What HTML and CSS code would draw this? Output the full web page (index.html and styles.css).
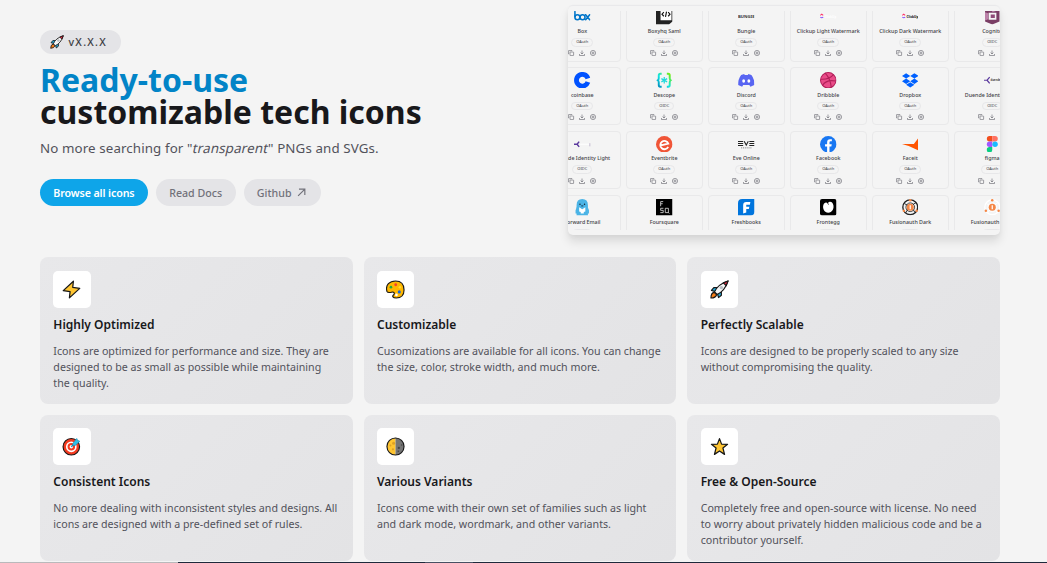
FILE: index.html
```
<!DOCTYPE html>
<html lang="en">
<head>
<meta charset="utf-8">
<title>Ready-to-use customizable tech icons</title>
<link rel="stylesheet" href="styles.css">
</head>
<body>
<svg class="defs" aria-hidden="true">
  <defs>
    <linearGradient id="g-descope" x1="0" y1="1" x2="1" y2="0"><stop offset="0" stop-color="#08b"/><stop offset=".45" stop-color="#12e5e5"/><stop offset="1" stop-color="#7ded00"/></linearGradient>
    <symbol id="acts" viewBox="0 0 28 6"><g fill="none" stroke="#52525b" stroke-width=".55"><rect x="2" y="2" width="3.6" height="3.6" rx=".5"/><path d="M1 4H.6V.6H4V1M14 .5V3.8M12.6 2.6 14 4 15.400 2.600M11.500 4V5.500H16.500V4"/><circle cx="25" cy="3" r="2.600"/><circle cx="25" cy="3" r="1"/></g></symbol>
    <symbol id="box" viewBox="0 0 16 16"><g fill="none" stroke="#0075c9" stroke-width="1.500" stroke-linecap="round"><path d="M.9 3.500V8.500M11.300 6.500 15.200 11.300M15.200 6.500 11.300 11.300"/><circle cx="3.300" cy="8.900" r="2.400"/><circle cx="8.300" cy="8.900" r="2.400"/></g></symbol>
    <symbol id="boxy" viewBox="0 0 16 16"><path fill="#222" d="M0 2.500 4 0H16V13L12.500 16H0z"/><path fill="#fff" d="M4.400.8H15V11.800H4.400z"/><path d="M7.600 4 5.800 6 7.600 8M11.800 4 13.600 6 11.800 8M10.200 3.500 9.200 8.500" fill="none" stroke="#111" stroke-width="1.100"/></symbol>
    <symbol id="bungie" viewBox="0 0 16 16"><text x="0" y="9.600" textLength="16" lengthAdjust="spacingAndGlyphs" font-family="Noto Sans" font-weight="700" font-size="3.800" fill="#333">BUNGIE</text></symbol>
    <symbol id="click-l" viewBox="0 0 16 16"><path d="M.3 7.200 1.700 6 3.100 7.200" fill="none" stroke="#f36" stroke-width="1"/><path d="M.3 8.800Q1.700 10 3.100 8.800" fill="none" stroke="#85f" stroke-width="1"/><text x="4.300" y="9.300" font-family="Noto Sans" font-weight="700" font-size="3.600" textLength="11.700" lengthAdjust="spacingAndGlyphs" fill="#fff">ClickUp</text></symbol>
    <symbol id="click-d" viewBox="0 0 16 16"><path d="M.3 7.200 1.700 6 3.100 7.200" fill="none" stroke="#f36" stroke-width="1"/><path d="M.3 8.800Q1.700 10 3.100 8.800" fill="none" stroke="#85f" stroke-width="1"/><text x="4.300" y="9.300" font-family="Noto Sans" font-weight="800" font-size="3.800" textLength="11.700" lengthAdjust="spacingAndGlyphs" fill="#111">ClickUp</text></symbol>
    <symbol id="cognito" viewBox="0 0 16 16"><path fill="#7a3e65" d="M1 3 8 0 15 3V13L8 16 1 13z"/><path fill="#bd82aa" d="M1 4 4 5V11L1 12zM8 0 13 2.500 8 4z"/><path fill="#f4f4f4" d="M4.500 4.500H12V11.500H4.500z"/><path fill="#8f4b78" d="M6.500 6.200H10.500V9.800H6.500z"/></symbol>
    <symbol id="coinbase" viewBox="0 0 16 16"><path fill="none" stroke="#0052ff" stroke-width="4.700" d="M13.500 6.200A5.700 5.700 0 1 0 13.500 9.800"/></symbol>
    <symbol id="descope" viewBox="0 0 16 16"><g fill="none" stroke="url(#g-descope)" stroke-width="1.900"><path d="M5.500 1.700H4.200Q2.700 1.700 2.700 3.400V5.800Q2.700 7.300 1.800 8 2.700 8.700 2.700 10.200V12.600Q2.700 14.300 4.200 14.300H5.500M10.500 1.700H11.800Q13.300 1.700 13.300 3.400V5.800Q13.300 7.300 14.200 8 13.300 8.700 13.300 10.200V12.600Q13.300 14.300 11.800 14.300H10.500"/></g><path stroke="#20d9dc" stroke-width="1.200" d="M8 4.800V11.200M5.200 6.400 10.800 9.600M10.800 6.400 5.200 9.600"/></symbol>
    <symbol id="discord" viewBox="0 0 16 16"><path fill="#5865f2" d="M3 3 6 2 6.500 3H9.500L10 2 13 3Q16 7 15.800 12.500L12 14.300 11 12.700H5L4 14.300 .2 12.500Q0 7 3 3z"/><g fill="#fff"><ellipse cx="5.500" cy="8.800" rx="1.400" ry="1.700"/><ellipse cx="10.500" cy="8.800" rx="1.400" ry="1.700"/></g></symbol>
    <symbol id="dribbble" viewBox="0 0 16 16"><circle cx="8" cy="8" r="7.500" fill="#ea4c89" stroke="#b2215a"/><path d="M5 1Q10 6 11 15M.7 7Q9 7.500 13 2.500M2.500 13Q6 7 15.300 8.700" fill="none" stroke="#b2215a" stroke-width="1.100"/></symbol>
    <symbol id="dropbox" viewBox="0 0 16 16"><path fill="#0061ff" d="M4 1.200 8 3.800 4 6.400 0 3.800zM12 1.200 16 3.800 12 6.400 8 3.800zM4 6.400 8 9 4 11.600 0 9zM12 6.400 16 9 12 11.600 8 9zM8 9.900 12 12.400 8 15 4 12.400z"/></symbol>
    <symbol id="duende" viewBox="0 0 16 16"><path fill="none" stroke="#5b3a9e" stroke-width="1.200" d="M0 8H3L5.500 5M3 8 5.500 11"/><text x="6.300" y="9.100" font-family="Noto Sans" font-weight="700" font-size="3.200" textLength="9.600" lengthAdjust="spacingAndGlyphs" fill="#444">duende</text></symbol>
    <symbol id="duende-l" viewBox="0 0 16 16"><path fill="none" stroke="#5b3a9e" stroke-width="1.400" d="M0 8H3L5 5.500M3 8 5 10.500"/><path stroke="#fff" d="M6 8H15"/><path stroke="#8d7aa9" stroke-width=".6" d="M15.500 7V10"/></symbol>
    <symbol id="eventbrite" viewBox="0 0 16 16"><circle cx="8" cy="8" r="8" fill="#f05537"/><path d="M3.800 9.400 11.900 7.300A4 4 0 1 0 11.800 10.500" fill="none" stroke="#fff" stroke-width="1.800"/></symbol>
    <symbol id="eve" viewBox="0 0 16 16"><path d="M0 5.300H5M0 7.300H5M0 9.300H5M6 5 8 8.800 10 5M11 5.300H16M11 7.300H16M11 9.300H16" fill="none" stroke="#222" stroke-width="1"/><path d="M3 11.500H13" stroke="#555" stroke-width=".7" stroke-dasharray="1 .8"/></symbol>
    <symbol id="facebook" viewBox="0 0 16 16"><circle cx="8" cy="8" r="8" fill="#1877f2"/><path fill="#fff" d="M6.900 16V10.300H4.900V8H6.900V6.200Q6.900 3.100 9.700 3.100H11.500V5H10.300Q9.200 5 9.200 6.300V8H11.400L11 10.300H9.200V16z"/></symbol>
    <symbol id="faceit" viewBox="0 0 16 16"><path fill="#f50" d="M16 1.700V14Q8 9.500 0 7.800H11.500z"/></symbol>
    <symbol id="figma" viewBox="0 0 16 16"><path fill="#f24e1e" d="M8 0H5.400a2.650 2.650 0 0 0 0 5.300H8z"/><path fill="#ff7262" d="M8 0H10.700a2.650 2.650 0 0 1 0 5.300H8z"/><path fill="#a259ff" d="M8 5.300H5.400a2.650 2.650 0 0 0 0 5.300H8z"/><circle cx="10.700" cy="8" r="2.650" fill="#1abcfe"/><path fill="#0acf83" d="M8 10.700H5.400A2.650 2.650 0 1 0 8 13.300z"/></symbol>
    <symbol id="forward" viewBox="0 0 16 16"><path fill="#4bb4e6" d="M2.500 14V6Q2.500 0 8 0T13.500 6V16H2.500V7z"/><path fill="#4bb4e6" d="M3 7 1.500 11V14H3zM13 7 14.500 11V14H13z"/><path fill="#fff" d="M5 8 8 10 11 8V12L9.500 12.500V14H6.500V12.500L5 12z"/><circle cx="5.800" cy="5" r=".7" fill="#123"/><circle cx="10.200" cy="5" r=".7" fill="#123"/><path d="M7 6.700H9" stroke="#123" stroke-width=".8"/></symbol>
    <symbol id="foursq" viewBox="0 0 16 16"><path d="M0 0H16V16H0z"/><path d="M4.500 7V2.500H7M4.500 4.600H6.500M7.200 9H4.500V11H7V13.200H4.200M12.200 13.200H9V9H12V13.200L13 14" fill="none" stroke="#ddd" stroke-width=".8"/></symbol>
    <symbol id="fresh" viewBox="0 0 16 16"><path fill="#0075dd" d="M4 0H16V12Q16 16 12 16H0V4Q0 0 4 0z"/><path fill="#fff" d="M5 14V6Q5 3 8 3H12L11.500 5.500H8V7.500H11L10.500 9.700H8V13z"/></symbol>
    <symbol id="frontegg" viewBox="0 0 16 16"><rect width="16" height="16" rx="2"/><path fill="#fff" d="M8 13.300C4.300 13 2.300 9.300 3.200 6 3.900 3.500 6 2.700 7.500 4.200 9.500 1.700 11.500 2.600 12.600 4.800 14.300 9 11.800 13 8 13.300z"/><path d="M7.200 3.500 8.300 5.500" fill="none" stroke="#000" stroke-width=".7"/></symbol>
    <symbol id="fusion" viewBox="0 0 16 16"><circle cx="8" cy="8" r="7.200" fill="none" stroke="currentColor" stroke-width="1.300"/><path d="M2.500 4.500 6 6.500M4 13 5.500 10M10.500 5.500 13.500 3.500M11 10.500 12.500 13" fill="none" stroke="currentColor" stroke-width=".9"/><circle cx="8" cy="8" r="4.200" fill="none" stroke="currentColor" stroke-width=".8"/><circle cx="8" cy="8" r="3.400" fill="#f58746"/><path d="M8 6V10" stroke="#fff" stroke-width="1.200"/><g fill="#f58746"><circle cx="8" cy="1.200" r="1.200"/><circle cx="1.800" cy="11.500" r="1.200"/><circle cx="14.200" cy="11.500" r="1.200"/></g></symbol>
    <symbol id="rocket" viewBox="0 0 20 20"><g stroke="#171717" stroke-width="1.200" stroke-linejoin="round"><path fill="#26a9d8" d="M7 8H4L1.500 11 5 12 8 15 9 18.500 12 16V13z"/><path fill="#f57c16" d="M4.500 13Q1 13.500 1 19 6 18.800 7 15.500z"/><path fill="#f5f5f5" d="M4.800 12.500Q8 4.500 19 1 15.500 12 7.500 15.200z"/><path fill="#ef233c" d="M14 3 19 1 17 6z"/></g><circle cx="12" cy="8" r="1.800" fill="#b8bdc2"/></symbol>
  </defs>
</svg>

<main class="page">
  <section class="hero">
    <div class="intro">
      <span class="version"><svg class="version-icon"><use href="#rocket"/></svg>vX.X.X</span>
      <h1><span>Ready-to-use</span><br>customizable tech icons</h1>
      <p class="lead">No more searching for "<em>transparent</em>" PNGs and SVGs.</p>
      <nav class="actions">
        <a class="btn primary">Browse all icons</a>
        <a class="btn">Read Docs</a>
        <a class="btn external">Github <svg class="arrow" viewBox="0 0 10 10"><path d="M1.200 8.800 8.500 1.500M2.200 1.300H8.700V7.800" fill="none" stroke="currentColor" stroke-width="1.300"/></svg></a>
      </nav>
    </div>
    <div class="preview"><div class="window"><div class="tiles">
      <div class="tile"><svg class="logo"><use href="#box"/></svg><b>Box</b><i>OAuth</i><svg class="acts"><use href="#acts"/></svg></div>
      <div class="tile"><svg class="logo"><use href="#boxy"/></svg><b>Boxyhq Saml</b><i>OAuth</i><svg class="acts"><use href="#acts"/></svg></div>
      <div class="tile"><svg class="logo"><use href="#bungie"/></svg><b>Bungie</b><i>OAuth</i><svg class="acts"><use href="#acts"/></svg></div>
      <div class="tile"><svg class="logo"><use href="#click-l"/></svg><b>Clickup Light Watermark</b><i>OAuth</i><svg class="acts"><use href="#acts"/></svg></div>
      <div class="tile"><svg class="logo"><use href="#click-d"/></svg><b>Clickup Dark Watermark</b><i>OAuth</i><svg class="acts"><use href="#acts"/></svg></div>
      <div class="tile"><svg class="logo"><use href="#cognito"/></svg><b>Cognito</b><i>OIDC</i><svg class="acts"><use href="#acts"/></svg></div>
      <div class="tile"><svg class="logo"><use href="#coinbase"/></svg><b>coinbase</b><i>OAuth</i><svg class="acts"><use href="#acts"/></svg></div>
      <div class="tile"><svg class="logo"><use href="#descope"/></svg><b>Descope</b><i>OIDC</i><svg class="acts"><use href="#acts"/></svg></div>
      <div class="tile"><svg class="logo"><use href="#discord"/></svg><b>Discord</b><i>OAuth</i><svg class="acts"><use href="#acts"/></svg></div>
      <div class="tile"><svg class="logo"><use href="#dribbble"/></svg><b>Dribbble</b><i>OAuth</i><svg class="acts"><use href="#acts"/></svg></div>
      <div class="tile"><svg class="logo"><use href="#dropbox"/></svg><b>Dropbox</b><i>OAuth</i><svg class="acts"><use href="#acts"/></svg></div>
      <div class="tile"><svg class="logo"><use href="#duende"/></svg><b>Duende Identity Dark</b><i>OIDC</i><svg class="acts"><use href="#acts"/></svg></div>
      <div class="tile"><svg class="logo"><use href="#duende-l"/></svg><b>Duende Identity Light</b><i>OIDC</i><svg class="acts"><use href="#acts"/></svg></div>
      <div class="tile"><svg class="logo"><use href="#eventbrite"/></svg><b>Eventbrite</b><i>OAuth</i><svg class="acts"><use href="#acts"/></svg></div>
      <div class="tile"><svg class="logo"><use href="#eve"/></svg><b>Eve Online</b><i>OAuth</i><svg class="acts"><use href="#acts"/></svg></div>
      <div class="tile"><svg class="logo"><use href="#facebook"/></svg><b>Facebook</b><i>OAuth</i><svg class="acts"><use href="#acts"/></svg></div>
      <div class="tile"><svg class="logo"><use href="#faceit"/></svg><b>Faceit</b><i>OAuth</i><svg class="acts"><use href="#acts"/></svg></div>
      <div class="tile"><svg class="logo"><use href="#figma"/></svg><b>figma</b><i>OAuth</i><svg class="acts"><use href="#acts"/></svg></div>
      <div class="tile"><svg class="logo"><use href="#forward"/></svg><b>Forward Email</b><i>OIDC</i><svg class="acts"><use href="#acts"/></svg></div>
      <div class="tile"><svg class="logo"><use href="#foursq"/></svg><b>Foursquare</b><i>OAuth</i><svg class="acts"><use href="#acts"/></svg></div>
      <div class="tile"><svg class="logo"><use href="#fresh"/></svg><b>Freshbooks</b><i>OAuth</i><svg class="acts"><use href="#acts"/></svg></div>
      <div class="tile"><svg class="logo"><use href="#frontegg"/></svg><b>Frontegg</b><i>OIDC</i><svg class="acts"><use href="#acts"/></svg></div>
      <div class="tile"><svg class="logo"><use href="#fusion"/></svg><b>Fusionauth Dark</b><i>OIDC</i><svg class="acts"><use href="#acts"/></svg></div>
      <div class="tile"><svg class="logo light"><use href="#fusion"/></svg><b>Fusionauth Light</b><i>OIDC</i><svg class="acts"><use href="#acts"/></svg></div>
    </div></div></div>
  </section>

  <section class="features">
    <article class="card"><div class="badge"><svg viewBox="0 0 20 20"><path fill="#ffc531" stroke="#171717" stroke-width="1.300" stroke-linejoin="round" d="M12 1.300 1.300 11.200 8.500 12.200 7.800 18.800 18.700 8.800 11.300 7.800z"/></svg></div><h2>Highly Optimized</h2><p>Icons are optimized for performance and size. They are designed to be as small as possible while maintaining the quality.</p></article>
    <article class="card"><div class="badge"><svg viewBox="0 0 20 20"><path fill="#ffb800" stroke="#171717" stroke-width="1.200" d="M1 12C-1 5 4 1 10 1S19 5 19 10.500 16 19 10.800 19C7 19 6.300 17 8 15.500 9.500 14 8.500 12.500 6.500 12.700 4 13.300 2 14 1 12z"/><circle cx="5.200" cy="7.500" r="1.400" fill="#29a83c"/><circle cx="10.200" cy="5" r="1.500" fill="#f4432c"/><circle cx="14.600" cy="7.700" r="1.300" fill="#ffda2e"/><circle cx="14" cy="12.500" r="1.600" fill="#1966d2"/><circle cx="11" cy="15.700" r="1.400" fill="#fff"/></svg></div><h2>Customizable</h2><p>Cusomizations are available for all icons. You can change the size, color, stroke width, and much more.</p></article>
    <article class="card"><div class="badge"><svg><use href="#rocket"/></svg></div><h2>Perfectly Scalable</h2><p>Icons are designed to be properly scaled to any size without compromising the quality.</p></article>
    <article class="card"><div class="badge"><svg viewBox="0 0 20 20"><circle cx="9.800" cy="10.300" r="8.700" fill="#f43b20" stroke="#171717" stroke-width="1.200"/><circle cx="9.800" cy="10.300" r="4.800" fill="#f43b20" stroke="#fff" stroke-width="1.700"/><circle cx="9.800" cy="10.300" r="1.800" fill="#fff"/><path fill="none" stroke="#148db4" stroke-width="1.300" d="M9.800 10.300 15 5"/><path fill="#31bfe5" stroke="#1585aa" stroke-width=".6" d="M11.500 6.500 15.500 1.500 16.500 3.500 18.800 4.500 14 8.900 11.300 9z"/></svg></div><h2>Consistent Icons</h2><p>No more dealing with inconsistent styles and designs. All icons are designed with a pre-defined set of rules.</p></article>
    <article class="card"><div class="badge"><svg viewBox="0 0 20 20"><path fill="#ffc531" d="M10 1A9 9 0 0 0 10 19z"/><path fill="#757575" d="M10 1A9 9 0 0 1 10 19z"/><circle cx="10" cy="10" r="9" fill="none" stroke="#171717" stroke-width="1.200"/><g fill="#dda126"><circle cx="8" cy="6.500" r="1.600"/><circle cx="4.700" cy="9" r="1"/><circle cx="7.300" cy="13" r="1.200"/></g><g fill="#454545"><circle cx="13.500" cy="11.500" r="1.200"/><circle cx="16.500" cy="8.500" r=".8"/><circle cx="13" cy="15" r=".8"/></g></svg></div><h2>Various Variants</h2><p>Icons come with their own set of families such as light and dark mode, wordmark, and other variants.</p></article>
    <article class="card"><div class="badge"><svg viewBox="0 0 20 20"><path fill="#ffc531" stroke="#171717" stroke-width="1.300" stroke-linejoin="round" d="M10 1.700 12.200 7.500 18.500 7.700 13.600 11.600 15.300 18.300 10 14.700 4.700 18.300 6.400 11.600 1.500 7.700 7.800 7.500z"/></svg></div><h2>Free &amp; Open-Source</h2><p>Completely free and open-source with license. No need to worry about privately hidden malicious code and be a contributor yourself.</p></article>
  </section>
  <div class="edge"><span></span><span></span><span></span><span></span></div>
</main>
</body>
</html>
```
FILE: styles.css
```
* { box-sizing: border-box; }
body { margin: 0; background: #f4f4f4; color: #18181b; font-family: "Noto Sans", sans-serif; overflow: hidden; }
.defs { position: absolute; width: 0; height: 0; }
.page { height: 563px; display: flex; flex-direction: column; overflow: hidden; }
.hero { display: flex; justify-content: space-between; height: 257px; flex: none; padding: 5px 47px 0 40px; }
.intro { padding-top: 25px; }
.version { display: flex; align-items: center; width: 81px; height: 24px; padding-left: 9.500px; gap: 5px; border-radius: 12px; background: #e4e4e7; font-size: 10.670px; letter-spacing: 1.250px; color: #3f3f46; font-weight: 500; }
.version-icon { width: 14px; height: 14px; flex: none; }
h1 { margin: 10px 0 0; font-size: 32px; line-height: 32px; font-weight: 700; letter-spacing: 0; white-space: nowrap; }
h1 span { color: #0284c7; }
.lead { margin: 10px 0 0; font-size: 13.330px; line-height: 20px; letter-spacing: .11px; color: #52525b; }
.lead em { display: inline-block; font-style: normal; letter-spacing: .17px; transform: skewX(-13deg); }
.actions { display: flex; gap: 8px; margin-top: 21px; }
.btn { display: flex; align-items: center; justify-content: center; gap: 5.500px; height: 27px; padding: 0 13.330px; border-radius: 14px; background: #e4e4e7; color: #71717a; font-size: 10.670px; font-weight: 500; white-space: nowrap; }
.primary { background: #0ea5e9; color: #fff; font-weight: 600; letter-spacing: -.11px; }
.external { padding-right: 15px; }
.arrow { width: 9px; height: 9px; }
.preview { width: 432px; height: 230px; padding: 5px 0; border-radius: 5px; background: #f4f4f4; border-top: 1px solid #e9e9eb; box-shadow: 0 7px 10px rgba(0,0,0,.1), 0 2px 4px rgba(0,0,0,.04); flex: none; }
.window { height: 219px; overflow: hidden; }
.tiles { display: grid; grid-template-columns: repeat(6, 76.600px); grid-auto-rows: 58px; gap: 5.670px 5.400px; width: 487px; margin: -7.300px 0 0 -24px; }
.tile { display: flex; flex-direction: column; align-items: center; padding-top: 3.600px; border: 1px solid #e9e9ea; border-radius: 4px; }
.logo { width: 16.500px; height: 16.500px; flex: none; color: #222; }
.light { color: #fff; }
.tile b { margin-top: 3.300px; height: 7px; font-size: 5.330px; line-height: 7px; font-weight: 500; white-space: nowrap; color: #3f3f46; }
.tile i { margin-top: 3px; padding: 0 4px; height: 8.500px; font-size: 4px; line-height: 6.500px; font-style: normal; border: 1px solid #e7e7e9; border-radius: 5px; color: #3f3f46; }
.acts { width: 28px; height: 6px; margin-top: 3.600px; flex: none; }
.features { display: grid; grid-template-columns: repeat(3, 1fr); grid-auto-rows: 146.670px; gap: 10.670px 11px; width: 960px; margin-left: 40px; padding-top: .3px; height: 305px; flex: none; }
.card { padding: 13.400px 13.330px 0; border-radius: 8px; background: linear-gradient(135deg, #e8e8ea, #e3e3e5); }
.badge { display: grid; place-items: center; width: 37.300px; height: 37px; border-radius: 5px; background: #fff; }
.badge svg { width: 19px; height: 19px; }
h2 { margin: 8px 0 0; font-size: 12px; line-height: 18.670px; font-weight: 600; }
.card p { margin: 8.300px 0 0; font-size: 10.670px; line-height: 16px; color: #52525b; }
.edge { display: grid; grid-template-columns: 178px 247px 48px 1fr; height: 1px; flex: none; }
.edge span { background: #1e293b; }
.edge span:first-child { background: #b9b9bb; }
.edge span:nth-child(3) { background: #475063; }
```
